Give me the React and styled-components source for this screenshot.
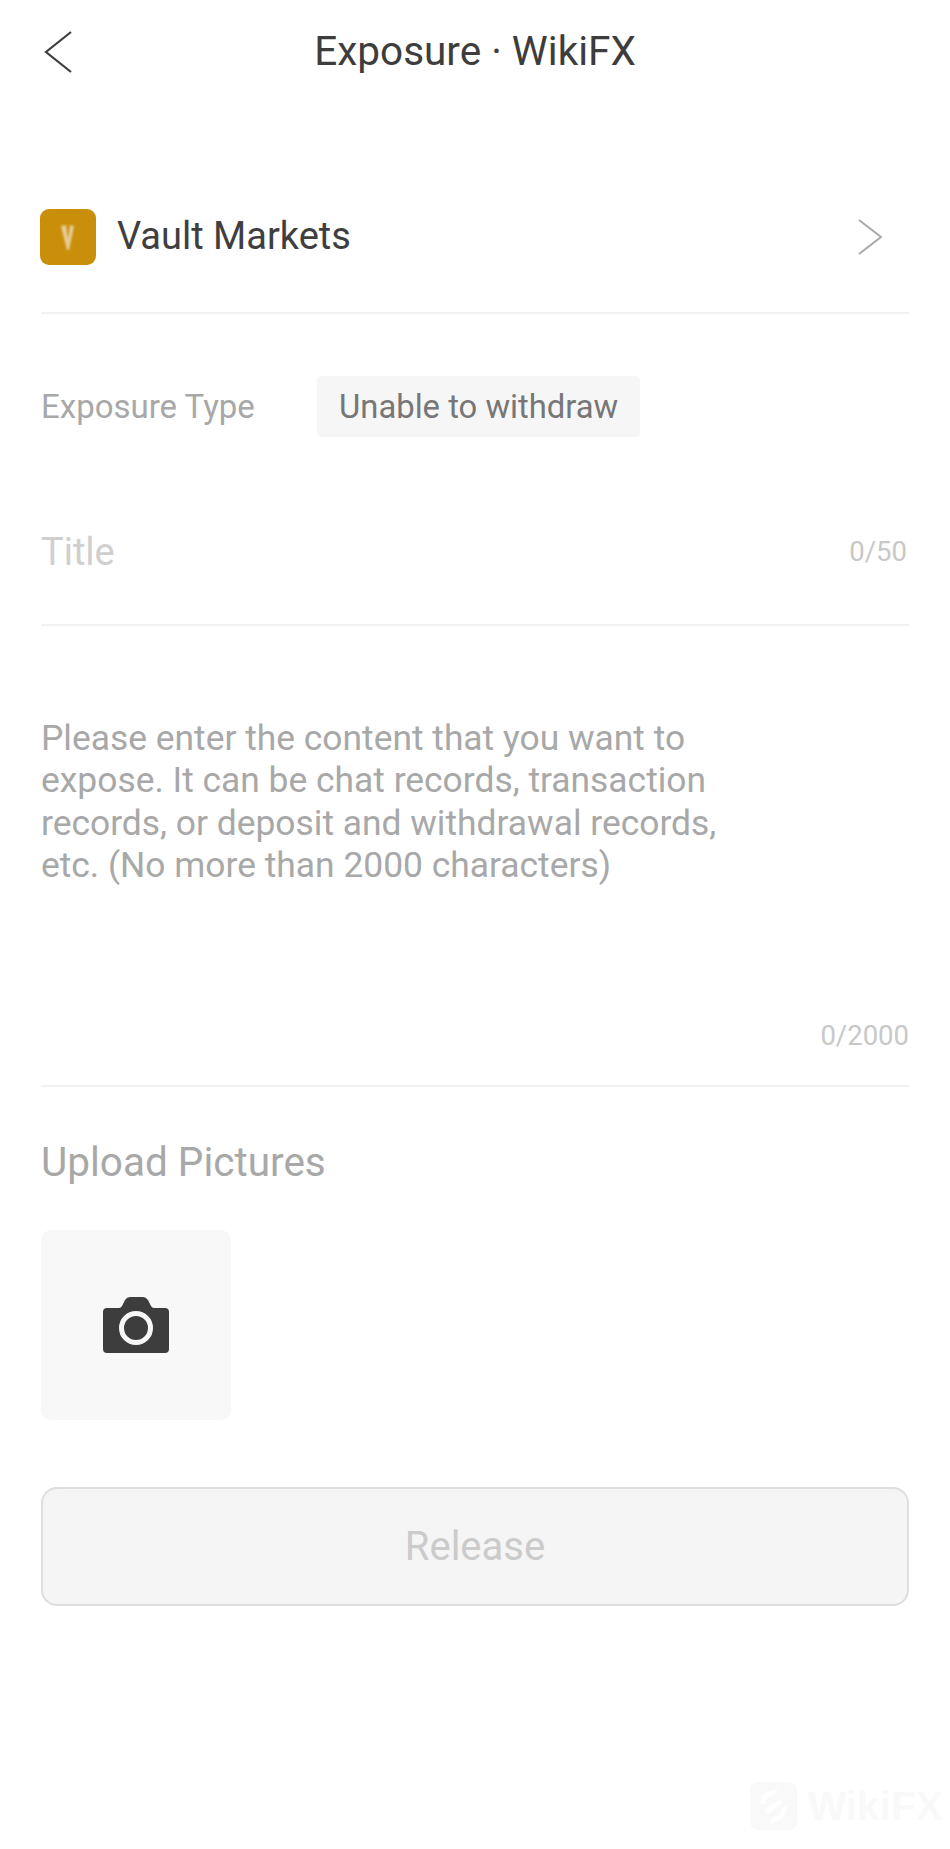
import React from "react";
import styled, { createGlobalStyle } from "styled-components";

const Global = createGlobalStyle`
  html, body { margin: 0; padding: 0; background: #fff; }
  body { font-family: Roboto, "Liberation Sans", sans-serif; }
`;

const Page = styled.div`
  position: relative;
  width: 950px;
  height: 1849px;
  overflow: hidden;
  background: #fff;
  display: flex;
  flex-direction: column;
`;

const Nav = styled.header`
  height: 102px;
  padding-left: 44px;
  display: flex;
  align-items: center;
  position: relative;
  color: #3d3d3d;
`;

const NavTitle = styled.h1`
  flex: 1;
  margin: 0 0 0 -44px;
  text-align: center;
  font-size: 40.5px;
  font-weight: 400;
  color: #3d3d3d;
`;

const BackIcon = styled.svg`
  position: absolute;
  left: 44px;
  top: 31px;
`;

const Form = styled.main`
  padding: 0 41px;
  display: flex;
  flex-direction: column;
`;

const BrokerRow = styled.div`
  height: 212px;
  box-sizing: border-box;
  padding: 107px 27px 0 0;
  display: flex;
  align-items: flex-start;
  border-bottom: 2px solid #f1f1f1;
`;

const Logo = styled.div`
  width: 56px;
  height: 56px;
  margin-left: -1px;
  border-radius: 9px;
  background: #c98f0b;
  display: flex;
  align-items: center;
  justify-content: center;
  flex-shrink: 0;
`;

const BrokerName = styled.div`
  flex: 1;
  margin-left: 21px;
  font-size: 38px;
  line-height: 54px;
  color: #3f3f3f;
`;

const TypeRow = styled.div`
  display: flex;
  align-items: center;
  margin-top: 62px;
`;

const TypeLabel = styled.div`
  width: 276px;
  font-size: 33px;
  color: #a8a8a8;
`;

const Chip = styled.div`
  height: 61px;
  padding: 0 22px;
  display: flex;
  align-items: center;
  border-radius: 5px;
  background: #f6f6f6;
  font-size: 32.8px;
  color: #777;
`;

const TitleRow = styled.div`
  height: 189px;
  box-sizing: border-box;
  padding: 42px 2px 0 0;
  display: flex;
  align-items: center;
  justify-content: space-between;
  border-bottom: 2px solid #f1f1f1;
`;

const TitlePlaceholder = styled.div`
  font-size: 38px;
  line-height: 52px;
  color: #cfcfcf;
`;

const Counter = styled.div`
  font-size: 27.5px;
  line-height: 34px;
  color: #c8c8c8;
`;

const ContentBlock = styled.div`
  height: 461px;
  box-sizing: border-box;
  padding: 91px 0 32px;
  display: flex;
  flex-direction: column;
  justify-content: space-between;
  border-bottom: 2px solid #f1f1f1;
`;

const ContentPlaceholder = styled.p`
  margin: 0;
  width: 700px;
  font-size: 35.4px;
  line-height: 42.4px;
  color: #a8a8a8;
`;

const ContentCounter = styled(Counter)`
  align-self: flex-end;
`;

const UploadTitle = styled.h2`
  margin: 50px 0 0;
  font-size: 40.5px;
  line-height: 50px;
  font-weight: 400;
  color: #a8a8a8;
`;

const UploadTile = styled.div`
  width: 190px;
  height: 190px;
  margin-top: 43px;
  border-radius: 10px;
  background: #f8f8f8;
  display: flex;
  align-items: center;
  justify-content: center;
`;

const ReleaseButton = styled.div`
  height: 119px;
  margin-top: 67px;
  box-sizing: border-box;
  border: 2px solid #dedede;
  border-radius: 16px;
  background: #f5f5f5;
  display: flex;
  align-items: center;
  justify-content: center;
  font-size: 40px;
  color: #cbcbcb;
`;

const Watermark = styled.div`
  position: absolute;
  left: 750px;
  top: 1782px;
  display: flex;
  align-items: center;
  gap: 11px;
  font-family: "Liberation Sans", sans-serif;
  font-size: 40.5px;
  font-weight: 700;
  color: #f9f9f9;
`;

export default function App() {
  return (
    <Page>
      <Global />
      <Nav>
        <BackIcon width="28" height="42" viewBox="0 0 28 42" fill="none">
          <path d="M27 1 L2 21 L27 41" stroke="#3d3d3d" strokeWidth="2.2" />
        </BackIcon>
        <NavTitle>Exposure · WikiFX</NavTitle>
      </Nav>
      <Form>
        <BrokerRow>
          <Logo>
            <svg width="20" height="30" viewBox="0 0 20 30" style={{ filter: "blur(0.8px)" }}>
              <path d="M3 4 L8 3 L10 18 L12 3 L16 4 L11 28 L9 28 Z" fill="#e6cf9a" />
            </svg>
          </Logo>
          <BrokerName>Vault Markets</BrokerName>
          <svg width="24" height="36" viewBox="0 0 24 36" fill="none" style={{ marginTop: 10 }}>
            <path d="M1 1 L23 18 L1 35" stroke="#a9a9a9" strokeWidth="2" />
          </svg>
        </BrokerRow>
        <TypeRow>
          <TypeLabel>Exposure Type</TypeLabel>
          <Chip>Unable to withdraw</Chip>
        </TypeRow>
        <TitleRow>
          <TitlePlaceholder>Title</TitlePlaceholder>
          <Counter>0/50</Counter>
        </TitleRow>
        <ContentBlock>
          <ContentPlaceholder>
            Please enter the content that you want to expose. It can be chat records, transaction
            records, or deposit and withdrawal records, etc. (No more than 2000 characters)
          </ContentPlaceholder>
          <ContentCounter>0/2000</ContentCounter>
        </ContentBlock>
        <UploadTitle>Upload Pictures</UploadTitle>
        <UploadTile>
          <svg width="68" height="58" viewBox="0 0 68 58">
            <path
              d="M5 12 H17 Q19 12 20 10 L23 4 Q25 1 28 1 H41 Q44 1 46 4 L49 10 Q50 12 52 12 H63 Q67 12 67 16 V53 Q67 57 63 57 H5 Q1 57 1 53 V16 Q1 12 5 12 Z"
              fill="#3d3d3d"
            />
            <circle cx="34" cy="32" r="14.5" fill="none" stroke="#f8f8f8" strokeWidth="5" />
          </svg>
        </UploadTile>
        <ReleaseButton>Release</ReleaseButton>
      </Form>
      <Watermark>
        <svg width="47" height="48" viewBox="0 0 47 48">
          <rect width="47" height="48" rx="8" fill="#f9f9f9" />
          <path d="M10 22 Q11 8 28 7 L24 13 Q16 14 15 22 Z M37 24 Q36 40 19 41 L23 35 Q31 34 32 26 Z M14 28 L29 18 L33 21 L18 32 Z" fill="#fff" />
        </svg>
        WikiFX
      </Watermark>
    </Page>
  );
}
